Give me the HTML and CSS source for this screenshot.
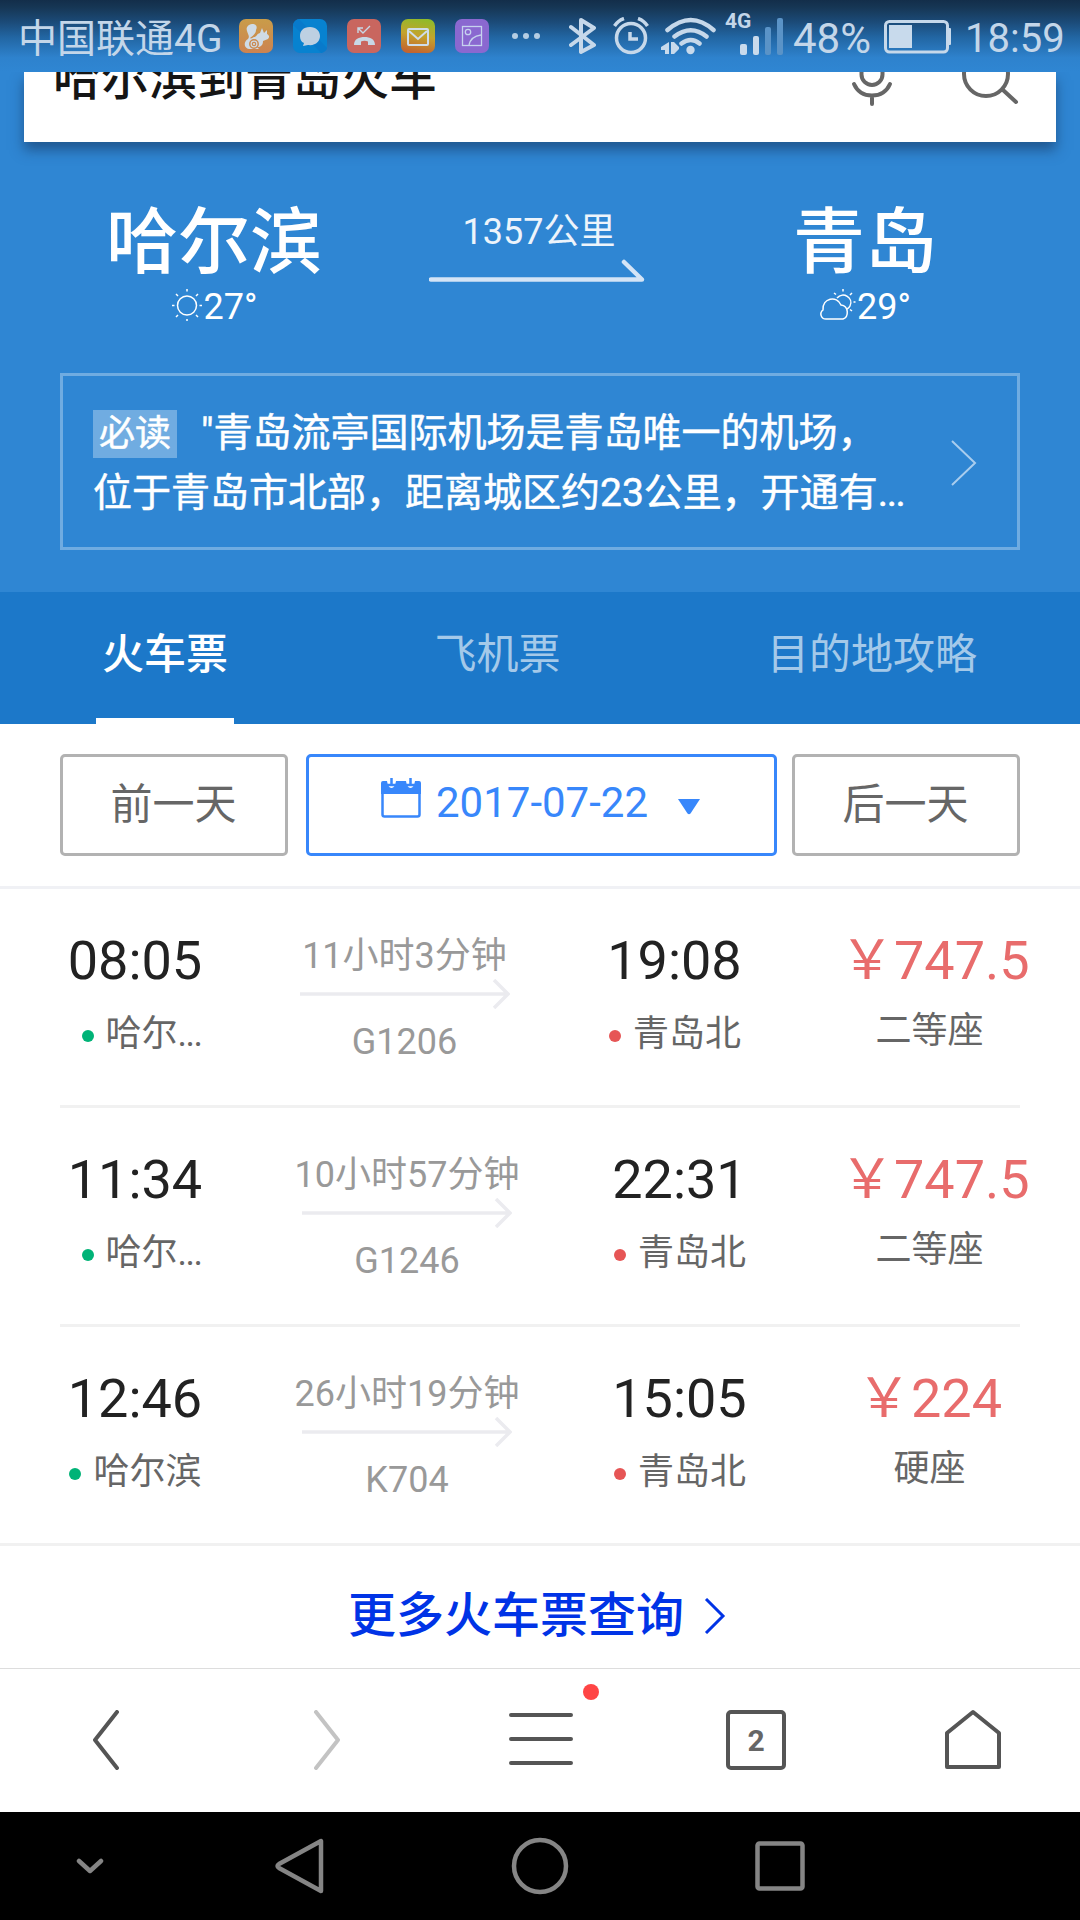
FILE: index.html
```html
<!DOCTYPE html>
<html lang="zh-CN">
<head>
    <meta charset="UTF-8">
    <meta name="viewport" content="width=device-width, initial-scale=1.0">
    <title>哈尔滨到青岛火车</title>
    <link rel="stylesheet" href="styles.css">
</head>
<body>
<div class="phone">
    <!-- Status bar -->
    <div class="status-bar">
        <span class="carrier">中国联通4G</span>
        <div class="app-icons">
            <svg width="34" height="34" viewBox="0 0 34 34">
                <defs><linearGradient id="uc" x1="0" y1="0" x2="0" y2="1"><stop offset="0" stop-color="#c99c49"/><stop offset="1" stop-color="#cd8350"/></linearGradient></defs>
                <rect width="34" height="34" rx="7" fill="url(#uc)"/>
                <path d="M13 5C8 6 7 9 8 12C9 16 11 17 9 20C4 23 5 29 10 30H20L18 28C22 28 24 26 24 22L29 20C31 18 30 16 28 15V11L25 14L23 9L21 14C17 15 18 18 15 18C13 19 12 20 11 19C15 16 17 14 17 11C18 9 18 7 16.500 6C15.500 5 14 4.800 13 5Z" fill="#cfdbe6"/>
                <circle cx="15" cy="25" r="4.200" fill="#cfdbe6" stroke="#cb8a4e" stroke-width="1.500"/>
                <circle cx="15" cy="25" r="1.700" fill="none" stroke="#cb8a4e" stroke-width="1.200"/>
            </svg>
            <svg width="34" height="34" viewBox="0 0 34 34">
                <rect width="34" height="34" rx="7" fill="#0782d0"/>
                <path d="M0 6Q1 1 6 0L34 29Q33 33 28 34Z" fill="#087acb"/>
                <path d="M17 8C10 8 7 12 7 17C7 20 8 23 11 24L10 27L15 26C23 27 27 22 27 17C27 12 23 8 17 8Z" fill="#bdd0e2"/>
            </svg>
            <svg width="34" height="34" viewBox="0 0 34 34">
                <rect width="34" height="34" rx="7" fill="#c9665f"/>
                <path d="M23 7L16 14L11 9M11 14V9H16" fill="none" stroke="#c8d8e6" stroke-width="1.400"/>
                <path d="M7 26C7 20 12 18 17.500 18C23 18 28 20 28 26H21V22.500C19 21.500 16 21.500 14 22.500V26Z" fill="#c8d8e6"/>
            </svg>
            <svg width="34" height="34" viewBox="0 0 34 34">
                <defs><linearGradient id="mail" x1="0.700" y1="0" x2="0.500" y2="1"><stop offset="0" stop-color="#8ebb2b"/><stop offset="0.500" stop-color="#c4a32c"/><stop offset="1" stop-color="#c3652f"/></linearGradient></defs>
                <rect width="34" height="34" rx="7" fill="url(#mail)"/>
                <rect x="7" y="10" width="20" height="16" rx="1" fill="none" stroke="#cfdde9" stroke-width="2"/>
                <path d="M8 12L17 20L26 12" fill="none" stroke="#cfdde9" stroke-width="2"/>
            </svg>
            <svg width="34" height="34" viewBox="0 0 34 34">
                <rect width="34" height="34" rx="7" fill="#8a68d0"/>
                <rect x="7.500" y="7.500" width="19" height="19" fill="none" stroke="#c6d2ee" stroke-width="1.300"/>
                <circle cx="13" cy="13" r="2.700" fill="none" stroke="#c6d2ee" stroke-width="1.300"/>
                <path d="M26 16C19 17 15 21 14 26" fill="none" stroke="#c6d2ee" stroke-width="1.300"/>
            </svg>
        </div>
        <svg class="more-dots" width="28" height="8" viewBox="0 0 28 8"><circle cx="3" cy="4" r="3"/><circle cx="14" cy="4" r="3"/><circle cx="25" cy="4" r="3"/></svg>
        <svg class="bluetooth" width="28" height="40" viewBox="0 0 28 40"><path d="M2 11L25 29L12 36V4L25 12L2 29" fill="none" stroke-width="4" stroke-linejoin="round" stroke-linecap="round"/></svg>
        <svg class="alarm" width="36" height="38" viewBox="0 0 36 38"><circle cx="18" cy="21" r="14.500" fill="none" stroke-width="3.500"/><path d="M17 15V22H25" fill="none" stroke-width="3.500"/><path d="M1.500 9Q5 3.500 11 1.500M34.500 9Q31 3.500 25 1.500" fill="none" stroke-width="3.500"/></svg>
        <svg class="wifi" width="56" height="40" viewBox="0 0 56 40">
            <path d="M6.500 14Q30 -6 52.500 14M13.500 20.500Q30 8 45.500 20.500M20.500 27.500Q30 20.500 38.500 27.500" fill="none" stroke-width="4.500" stroke-linecap="round"/>
            <circle class="solid" cx="29.500" cy="34" r="4.200"/>
            <path class="solid" d="M8 26V38H4V34H0V31ZM10 26H13L18 31V33L13 38H10Z"/>
        </svg>
        <div class="signal">
            <span class="net">4G</span>
            <svg width="44" height="38" viewBox="0 0 44 38"><rect class="solid" y="27" width="7" height="11" rx="2"/><rect class="solid" x="13" y="19" width="6" height="19" rx="2"/><rect class="faint" x="25" y="10" width="6" height="28" rx="2"/><rect class="faint" x="37" y="1" width="6" height="37" rx="2"/></svg>
        </div>
        <span class="percent">48%</span>
        <svg class="battery" width="68" height="34" viewBox="0 0 68 34"><rect x="1.500" y="1.500" width="62" height="30.500" rx="4" fill="none" stroke-width="3"/><rect class="solid" x="5" y="5" width="23" height="23"/><rect class="solid" x="64" y="8" width="3" height="17" rx="1"/></svg>
        <span class="clock">18:59</span>
    </div>

    <div class="hero">
        <!-- Search box, scrolled partly under the status bar -->
        <div class="search-box">
            <span class="search-text">哈尔滨到青岛火车</span>
            <svg class="mic" width="42" height="60" viewBox="0 0 42 60"><rect x="10.500" y="2" width="21" height="37" rx="10.500"/><path d="M3 38Q8 49.500 21 49.500Q34 49.500 39 38M21 49.500V58" stroke-linecap="round"/></svg>
            <svg class="magnifier" width="60" height="58" viewBox="0 0 60 58"><circle cx="24" cy="27" r="22"/><path d="M41 43L54 55" stroke-linecap="round"/></svg>
        </div>

        <div class="route">
            <div class="city">
                <div class="city-name">哈尔滨</div>
                <div class="weather">
                    <svg width="32" height="32" viewBox="0 0 32 32"><circle cx="16" cy="16.500" r="9.500"/><path d="M16 0V2.500M16 30V32.500M1 16.500H3.500M28.500 16.500H31M5 5L7 7M25 7L27 5M5 28L7 26M25 26L27 28"/></svg>
                    <span>27°</span>
                </div>
            </div>
            <div class="distance">
                <span>1357公里</span>
                <svg width="216" height="24" viewBox="0 0 216 24"><path d="M2 20.500H213L195 3"/></svg>
            </div>
            <div class="city">
                <div class="city-name">青岛</div>
                <div class="weather">
                    <svg width="37" height="32" viewBox="0 0 37 32"><path d="M7 30C2 30 0 24 4 21C3 9 18 6 22 16C30 17 30 28 24 30Z"/><path d="M18 9C24 2 35 9 31 17Q30 19 28 20M24 0V2.500M15 4L17 5.500M31 6L33 4M34.500 13H36.500M31 20.500L33 22"/></svg>
                    <span>29°</span>
                </div>
            </div>
        </div>

        <div class="notice">
            <p><span class="tag">必读</span>"青岛流亭国际机场是青岛唯一的机场，<br>位于青岛市北部，距离城区约23公里，开通有<span class="dots">...</span></p>
            <svg width="26" height="46" viewBox="0 0 26 46"><path d="M1 1L24 23L1 45"/></svg>
        </div>
    </div>

    <div class="tabs">
        <div class="tab active">火车票</div>
        <div class="tab">飞机票</div>
        <div class="tab">目的地攻略</div>
    </div>

    <div class="dates">
        <button class="day">前一天</button>
        <button class="today">
            <svg width="40" height="40" viewBox="0 0 40 40"><rect x="1.500" y="7" width="37" height="31.500" rx="2" fill="none" stroke-width="2.500"/><path class="solid" d="M0 5Q0 3 2 3H6Q7 10 10.500 10Q14 10 15 3H25Q26 10 29.500 10Q33 10 34 3H38Q40 3 40 5V16H0Z"/><path d="M10.500 0V7M29.500 0V7" stroke-width="2.500"/></svg>
            <span>2017-07-22</span>
            <svg class="caret" width="22" height="16" viewBox="0 0 22 16"><path class="solid" d="M0 0H22L12.500 14.500Q11 16 9.500 14.500Z"/></svg>
        </button>
        <button class="day">后一天</button>
    </div>

    <!-- Train list -->
    <div class="trains">
        <div class="train">
            <div class="stop">
                <div class="time">08:05</div>
                <div class="station start"><span>哈尔<span class="dots">...</span></span></div>
            </div>
            <div class="trip">
                <div class="duration">11小时3分钟</div>
                <svg width="210" height="30" viewBox="0 0 210 30"><path d="M0 15H208M194 1L208 15L194 29"/></svg>
                <div class="number">G1206</div>
            </div>
            <div class="stop">
                <div class="time">19:08</div>
                <div class="station end"><span>青岛北</span></div>
            </div>
            <div class="fare">
                <div class="price">￥747.5</div>
                <div class="seat">二等座</div>
            </div>
        </div>
        <div class="train wide">
            <div class="stop">
                <div class="time">11:34</div>
                <div class="station start"><span>哈尔<span class="dots">...</span></span></div>
            </div>
            <div class="trip">
                <div class="duration">10小时57分钟</div>
                <svg width="210" height="30" viewBox="0 0 210 30"><path d="M0 15H208M194 1L208 15L194 29"/></svg>
                <div class="number">G1246</div>
            </div>
            <div class="stop">
                <div class="time">22:31</div>
                <div class="station end"><span>青岛北</span></div>
            </div>
            <div class="fare">
                <div class="price">￥747.5</div>
                <div class="seat">二等座</div>
            </div>
        </div>
        <div class="train wide">
            <div class="stop">
                <div class="time">12:46</div>
                <div class="station start"><span>哈尔滨</span></div>
            </div>
            <div class="trip">
                <div class="duration">26小时19分钟</div>
                <svg width="210" height="30" viewBox="0 0 210 30"><path d="M0 15H208M194 1L208 15L194 29"/></svg>
                <div class="number">K704</div>
            </div>
            <div class="stop">
                <div class="time">15:05</div>
                <div class="station end"><span>青岛北</span></div>
            </div>
            <div class="fare">
                <div class="price">￥224</div>
                <div class="seat">硬座</div>
            </div>
        </div>
    </div>

    <a class="more">
        <span>更多火车票查询</span>
        <svg width="22" height="36" viewBox="0 0 22 36"><path d="M2 1L19 18L2 35"/></svg>
    </a>

    <!-- Browser toolbar -->
    <div class="toolbar">
        <div class="tool"><svg class="back" width="28" height="60" viewBox="0 0 28 60"><path d="M25 2L3 30L25 58"/></svg></div>
        <div class="tool disabled"><svg class="forward" width="28" height="60" viewBox="0 0 28 60"><path d="M3 2L25 30L3 58"/></svg></div>
        <div class="tool">
            <svg class="menu" width="66" height="54" viewBox="0 0 66 54"><path d="M3 3H63M3 27H63M3 51H63"/></svg>
            <i class="badge"></i>
        </div>
        <div class="tool"><span class="windows">2</span></div>
        <div class="tool"><svg class="home" width="58" height="62" viewBox="0 0 58 62"><path d="M29 4L55 25V59H3V25Z"/></svg></div>
    </div>

    <!-- System keys -->
    <div class="nav-keys">
        <svg width="28" height="18" viewBox="0 0 28 18"><path d="M3 4L14 14L25 4"/></svg>
        <svg class="key-back" width="50" height="58" viewBox="0 0 50 58"><path d="M46 4V54L4 31Q1 29 4 27Z"/></svg>
        <svg class="key-home" width="58" height="58" viewBox="0 0 58 58"><circle cx="29" cy="29" r="26"/></svg>
        <svg class="key-recent" width="50" height="50" viewBox="0 0 50 50"><rect x="2.500" y="2.500" width="45" height="45" rx="2"/></svg>
    </div>
</div>
</body>
</html>
```
FILE: styles.css
```css
* {
    box-sizing: border-box;
}
body {
    margin: 0;
    font-family: Roboto, "Noto Sans CJK SC", sans-serif;
    background-color: #fff;
}
svg {
    display: block;
    flex: none;
}
.phone {
    width: 1080px;
    height: 1920px;
    overflow: hidden;
    display: flex;
    flex-direction: column;
}
.dots {
    letter-spacing: -1.5px;
}

/* status bar */
.status-bar {
    height: 72px;
    padding-left: 18px;
    display: flex;
    align-items: center;
    background: linear-gradient(#132e4a 0, #163654 10%, #1b4a77 30%, #2266a3 52%, #2e82cd 80%, #2f86d3 100%);
    color: #c3d6e9;
    font-size: 40px;
    line-height: 48px;
    white-space: nowrap;
}
.status-bar > * {
    flex: none;
}
.carrier {
    width: 221px;
    margin-top: 6px;
    font-size: 39px;
}
.app-icons {
    display: flex;
    gap: 20px;
}
.more-dots {
    margin-left: 23px;
    fill: #b5cde3;
}
.status-bar .solid {
    fill: #c8daec;
    stroke: none;
}
.status-bar .faint {
    fill: #5a93c7;
}
.bluetooth, .alarm, .wifi, .battery {
    stroke: #c6d8ea;
}
.bluetooth {
    margin-left: 29px;
}
.alarm {
    margin-left: 16px;
}
.wifi {
    margin-left: 12px;
}
.signal {
    display: flex;
    margin-left: 8px;
}
.net {
    width: 15px;
    height: 38px;
    margin-top: -6px;
    font-size: 21px;
    font-weight: bold;
    line-height: 20px;
}
.percent {
    width: 91px;
    margin-top: 5px;
    margin-left: 9px;
    font-size: 42px;
}
.battery {
    margin-top: 13px;
    margin-bottom: 11px;
}
.clock {
    margin-top: 5px;
    margin-left: 13px;
    font-size: 40px;
}

/* blue header */
.hero {
    height: 520px;
    padding: 0 24px;
    background-color: #2f86d3;
}
.search-box {
    height: 70px;
    padding: 0 32px;
    display: flex;
    align-items: flex-start;
    background-color: #fff;
    box-shadow: 0 8px 12px rgba(20, 50, 90, 0.55);
    clip-path: inset(0 -24px -24px -24px);
}
.search-text {
    flex: 1;
    margin-top: -25px;
    margin-left: -3px;
    font-size: 48px;
    font-weight: 500;
    line-height: 64px;
    color: #151515;
}
.search-box svg {
    margin-top: -26px;
    fill: none;
    stroke: #666;
    stroke-width: 4;
}
.magnifier {
    margin-left: 69px;
    margin-right: 2px;
}
.search-box .magnifier {
    margin-top: -25px;
}
.route {
    height: 231px;
    padding: 53px 36px 0;
    display: grid;
    grid-template-columns: 308px 1fr 310px;
    color: #fff;
}
.city {
    display: flex;
    flex-direction: column;
    align-items: center;
}
.city-name {
    font-size: 72px;
    line-height: 96px;
    font-weight: 500;
}
.weather {
    display: flex;
    align-items: center;
    gap: 1px;
    margin-top: -6px;
    font-size: 36px;
    line-height: 44px;
}
.weather svg {
    margin-top: -4px;
    fill: none;
    stroke: #fff;
    stroke-width: 1.5;
}
.distance {
    display: flex;
    flex-direction: column;
    align-items: center;
    font-size: 36px;
    line-height: 48px;
    padding-top: 13px;
    color: #edf4fb;
}
.distance svg {
    margin-top: 3px;
    margin-right: 4px;
    fill: none;
    stroke: #d4e4f6;
    stroke-width: 4.5;
    stroke-linecap: round;
    stroke-linejoin: round;
}
.notice {
    height: 177px;
    margin: 0 36px;
    padding: 27px 40px 0 30px;
    display: flex;
    justify-content: space-between;
    border: 3px solid #70ace1;
    color: #fff;
}
.notice p {
    margin: 0;
    font-size: 39px;
    line-height: 60px;
    white-space: nowrap;
    -webkit-text-stroke: 0.5px #fff;
}
.notice svg {
    margin-top: 37px;
    fill: none;
    stroke: #a9cdee;
    stroke-width: 2;
}
.tag {
    display: inline-block;
    width: 84px;
    height: 48px;
    margin-right: 24px;
    background-color: #70ace1;
    font-size: 36px;
    line-height: 48px;
    text-align: center;
}

/* tabs */
.tabs {
    height: 132px;
    padding: 0 103px 0 102px;
    display: flex;
    justify-content: space-between;
    background-color: #1c78c9;
    color: #a4c9e9;
    font-size: 42px;
    line-height: 125px;
}
.tab.active {
    margin: 0 -6px;
    padding: 0 6px;
    border-bottom: 6px solid #fff;
    color: #fff;
    font-weight: 500;
}

/* date picker */
.dates {
    height: 165px;
    padding: 30px 60px 0;
    display: flex;
    justify-content: space-between;
    border-bottom: 3px solid #f0f1f5;
}
.dates button {
    height: 102px;
    padding: 0 0 6px;
    border: 3px solid #b2b2b2;
    border-radius: 5px;
    background-color: #fff;
    color: #666;
    font-family: inherit;
    font-size: 42px;
}
.dates .day {
    width: 228px;
    padding: 0 1px 10px 0;
}
.dates .today {
    width: 471px;
    margin-left: 3px;
    padding-right: 2px;
    display: flex;
    align-items: center;
    justify-content: center;
    border-color: #3887fb;
    color: #3887fb;
}
.today svg {
    margin: -9px 15px 0 0;
    stroke: #3887fb;
}
.today .solid {
    fill: #3887fb;
    stroke: none;
}
.today .caret {
    margin: 10px 0 0 30px;
}

/* train list */
.train {
    height: 219px;
    margin: 0 60px;
    display: grid;
    grid-template-columns: 150px 389px 151px 1fr;
    border-bottom: 3px solid #f1f1f1;
    text-align: center;
    white-space: nowrap;
}
.train.wide {
    grid-template-columns: 150px 394px 151px 1fr;
}
.train:last-child {
    margin: 0;
    padding: 0 60px;
}
.time, .price {
    margin-top: 36px;
    font-size: 54px;
    line-height: 72px;
    color: #222;
}
.station {
    width: 133px;
    height: 48px;
    margin: 13px auto 0;
    display: flex;
    align-items: center;
    justify-content: flex-end;
    font-size: 36px;
    line-height: 48px;
    color: #666;
}
.station::before {
    content: "";
    width: 12px;
    height: 12px;
    margin: 4px 12px 0 0;
    border-radius: 50%;
    background-color: #00b377;
}
.station.end::before {
    background-color: #e65555;
}
.trip {
    font-size: 36px;
    line-height: 48px;
    color: #999;
}
.duration {
    margin-top: 43px;
}
.trip svg {
    margin: -1px auto 0;
    fill: none;
    stroke: #ebebef;
    stroke-width: 3.5;
}
.number {
    margin-top: 9px;
}
.fare {
    width: 179px;
    margin-left: auto;
    margin-right: 1px;
}
.price {
    color: #e86c6c;
    display: flex;
    justify-content: safe center;
}
.seat {
    margin-top: 10px;
    font-size: 36px;
    line-height: 48px;
    color: #666;
}

.more {
    height: 122px;
    padding: 17px 6px 0 0;
    display: flex;
    align-items: center;
    justify-content: center;
    gap: 20px;
    color: #0033e6;
    font-size: 48px;
    font-weight: 500;
    line-height: 60px;
}
.more svg {
    fill: none;
    stroke: #0033e6;
    stroke-width: 3;
}

/* browser toolbar */
.toolbar {
    height: 144px;
    display: grid;
    grid-template-columns: repeat(5, 1fr);
    border-top: 1px solid #ddd;
}
.tool {
    position: relative;
    padding-bottom: 2px;
    display: flex;
    align-items: center;
    justify-content: center;
}
.tool svg {
    fill: none;
    stroke: #555;
    stroke-width: 4;
    stroke-linejoin: round;
    stroke-linecap: round;
}
.tool.disabled svg {
    stroke: #c3c3c3;
}
.tool .back {
    margin-right: 4px;
}
.tool .forward {
    margin-left: 6px;
}
.tool .menu, .tool .home {
    margin-left: 2px;
    margin-bottom: 2px;
}
.badge {
    position: absolute;
    top: 15px;
    left: 151px;
    width: 16px;
    height: 16px;
    border-radius: 50%;
    background-color: #ff4545;
}
.windows {
    width: 60px;
    height: 60px;
    border: 4px solid #555;
    border-radius: 5px;
    color: #666;
    font-size: 30px;
    font-weight: bold;
    line-height: 53px;
    text-align: center;
}

/* system keys */
.nav-keys {
    flex: 1;
    padding-left: 76px;
    display: flex;
    align-items: center;
    background-color: #000;
}
.nav-keys svg {
    fill: none;
    stroke: #858585;
    stroke-width: 4.5;
    stroke-linejoin: round;
    stroke-linecap: round;
}
.key-back {
    margin-left: 171px;
}
.key-home, .key-recent {
    margin-left: 186px;
}
```
